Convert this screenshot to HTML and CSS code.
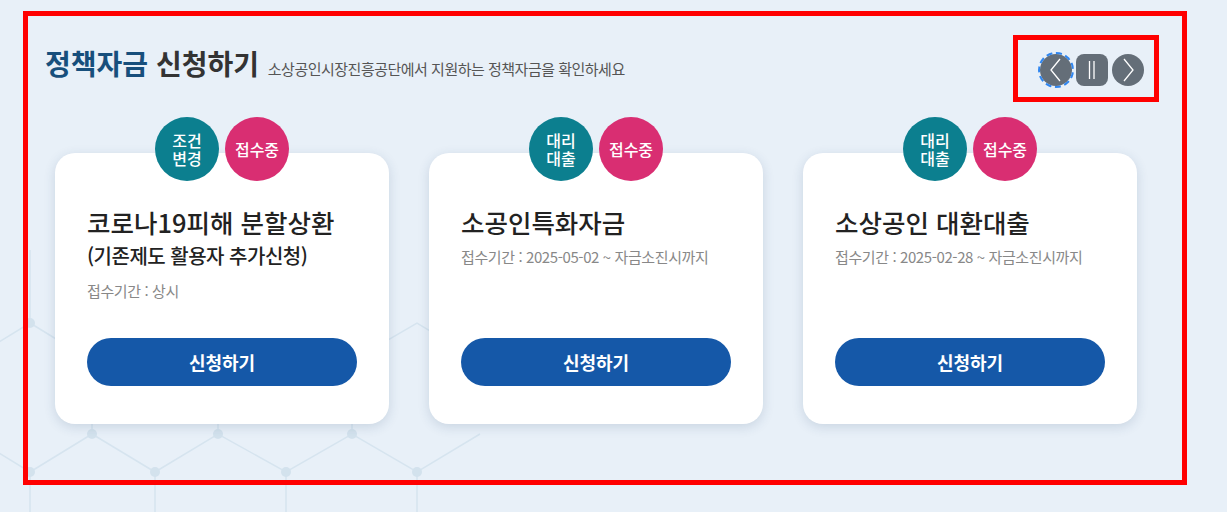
FILE: index.html
```html
<!DOCTYPE html>
<html lang="ko">
<head>
<meta charset="utf-8">
<title>정책자금 신청하기</title>
<link rel="stylesheet" href="styles.css">
</head>
<body>
<svg class="bg-pattern" width="1227" height="512" viewBox="0 0 1227 512" aria-hidden="true">
  <g class="bg-lines">
    <polyline points="-32,361 30,323 92,361 155,323 218,361 286,323 352,361 417,323 480,361"/>
    <polyline points="-32,434 30,472 92,434 155,472 218,434 286,472 352,434 417,472 480,434"/>
    <line x1="30" y1="323" x2="30" y2="250"/>
    <line x1="155" y1="323" x2="155" y2="250"/>
    <line x1="286" y1="323" x2="286" y2="250"/>
    <line x1="92" y1="361" x2="92" y2="434"/>
    <line x1="218" y1="361" x2="218" y2="434"/>
    <line x1="352" y1="361" x2="352" y2="434"/>
    <line x1="30" y1="472" x2="30" y2="545"/>
    <line x1="155" y1="472" x2="155" y2="545"/>
    <line x1="286" y1="472" x2="286" y2="545"/>
    <line x1="417" y1="472" x2="417" y2="545"/>
  </g>
  <g class="bg-nodes">
    <circle cx="30" cy="323" r="5"/><circle cx="92" cy="361" r="5"/><circle cx="155" cy="323" r="5"/>
    <circle cx="218" cy="361" r="5"/><circle cx="286" cy="323" r="5"/><circle cx="352" cy="361" r="5"/>
    <circle cx="30" cy="472" r="5"/><circle cx="92" cy="434" r="5"/><circle cx="155" cy="472" r="5"/>
    <circle cx="218" cy="434" r="5"/><circle cx="286" cy="472" r="5"/><circle cx="352" cy="434" r="5"/>
    <circle cx="417" cy="472" r="5"/>
  </g>
</svg>

<section class="policy">
  <div class="policy-head">
    <h2 class="policy-title"><span class="accent">정책자금</span> 신청하기 <small class="policy-desc">소상공인시장진흥공단에서 지원하는 정책자금을 확인하세요</small></h2>
    <div class="slider-ctrl">
      <button class="ctrl ctrl-prev" type="button" aria-label="이전">
        <svg width="32" height="32" viewBox="0 0 32 32"><polyline points="20,5 11,16 20,27"/></svg>
      </button>
      <button class="ctrl ctrl-pause" type="button" aria-label="정지">
        <svg width="32" height="32" viewBox="0 0 32 32"><line x1="13.5" y1="7" x2="13.5" y2="25"/><line x1="18" y1="7" x2="18" y2="25"/></svg>
      </button>
      <button class="ctrl ctrl-next" type="button" aria-label="다음">
        <svg width="32" height="32" viewBox="0 0 32 32"><polyline points="12,5 21,16 12,27"/></svg>
      </button>
    </div>
  </div>

  <ul class="cards">
    <li class="card">
      <div class="badges"><span class="badge badge-teal"><span class="badge-line">조건</span><span class="badge-line">변경</span></span><span class="badge badge-pink">접수중</span></div>
      <h3 class="card-title">코로나19피해 분할상환<span class="card-sub">(기존제도 활용자 추가신청)</span></h3>
      <p class="period">접수기간 : 상시</p>
      <a class="apply" href="#">신청하기</a>
    </li>
    <li class="card">
      <div class="badges"><span class="badge badge-teal"><span class="badge-line">대리</span><span class="badge-line">대출</span></span><span class="badge badge-pink">접수중</span></div>
      <h3 class="card-title">소공인특화자금</h3>
      <p class="period">접수기간 : 2025-05-02 ~ 자금소진시까지</p>
      <a class="apply" href="#">신청하기</a>
    </li>
    <li class="card">
      <div class="badges"><span class="badge badge-teal"><span class="badge-line">대리</span><span class="badge-line">대출</span></span><span class="badge badge-pink">접수중</span></div>
      <h3 class="card-title">소상공인 대환대출</h3>
      <p class="period">접수기간 : 2025-02-28 ~ 자금소진시까지</p>
      <a class="apply" href="#">신청하기</a>
    </li>
  </ul>
</section>
</body>
</html>
```

FILE: styles.css
```css
* { box-sizing: border-box; }

html, body {
  margin: 0;
  padding: 0;
}

body {
  width: 1227px;
  height: 512px;
  overflow: hidden;
  background: #e8f0f8;
  font-family: "Noto Sans CJK KR", "Noto Sans", sans-serif;
  color: #222;
  position: relative;
}

.bg-pattern {
  position: absolute;
  left: 0;
  top: 0;
  z-index: 0;
  pointer-events: none;
}

.bg-lines polyline,
.bg-lines line {
  fill: none;
  stroke: #d6e4ef;
  stroke-width: 1.5;
}

.bg-nodes circle {
  fill: #d3e2ed;
}

.policy {
  position: relative;
  z-index: 1;
  margin: 11px 0 0 23px;
  width: 1164px;
  height: 474px;
  border: 5px solid #ff0000;
  padding: 19px 23px 0 17px;
}

.policy-head {
  display: flex;
  justify-content: space-between;
  align-items: flex-start;
}

.policy-title {
  margin: 10px 0 0;
  font-size: 28px;
  line-height: 36px;
  font-weight: 700;
  letter-spacing: 0;
  color: #333;
}

.policy-title .accent {
  color: #174f7c;
}

.policy-desc {
  font-size: 15px;
  font-weight: 400;
  letter-spacing: -0.5px;
  color: #555;
  margin-left: 1px;
}

.slider-ctrl {
  width: 146px;
  height: 67px;
  border: 5px solid #ff0000;
  display: flex;
  align-items: center;
  gap: 4px;
  padding: 2px 0 0 22px;
}

.ctrl {
  width: 32px;
  height: 32px;
  padding: 0;
  border: 0;
  background: #646e78;
  border-radius: 50%;
  display: flex;
  align-items: center;
  justify-content: center;
}

.ctrl svg {
  display: block;
}

.ctrl polyline,
.ctrl line {
  fill: none;
  stroke: #fff;
  stroke-width: 1.3;
}

.ctrl-prev {
  outline: 2px dashed #2f86f0;
  outline-offset: 0;
}

.ctrl-pause {
  border-radius: 8px;
}

.cards {
  list-style: none;
  margin: 51px 0 0 10px;
  padding: 0;
  display: flex;
  gap: 40px;
}

.card {
  position: relative;
  width: 334px;
  height: 271px;
  background: #fff;
  border-radius: 20px;
  box-shadow: 0 3px 12px rgba(40, 70, 110, 0.16);
  padding: 52px 32px 38px;
  display: flex;
  flex-direction: column;
}

.badges {
  position: absolute;
  top: -36px;
  left: 50%;
  transform: translateX(-50%);
  display: flex;
  gap: 6px;
}

.badge {
  width: 64px;
  height: 64px;
  border-radius: 50%;
  display: flex;
  flex-direction: column;
  align-items: center;
  justify-content: center;
  text-align: center;
  color: #fff;
  font-size: 16px;
  line-height: 19px;
  font-weight: 500;
  letter-spacing: 0;
}

.badge-line {
  display: block;
  height: 18px;
  line-height: 18px;
}

.badge-teal { background: #0c7f8f; }
.badge-pink { background: #d92e72; }

.card-title {
  margin: 0;
  font-size: 25.5px;
  line-height: 34px;
  font-weight: 500;
  letter-spacing: 0;
  color: #222;
}

.card-sub {
  display: block;
  font-size: 20px;
  letter-spacing: -0.5px;
}

.period {
  margin: 7px 0 0;
  font-size: 15px;
  line-height: 22px;
  letter-spacing: -0.4px;
  color: #888;
}

.apply {
  margin-top: auto;
  height: 48px;
  border-radius: 24px;
  background: #1558a8;
  color: #fff;
  text-decoration: none;
  font-size: 18px;
  font-weight: 700;
  display: flex;
  align-items: center;
  justify-content: center;
}
```
